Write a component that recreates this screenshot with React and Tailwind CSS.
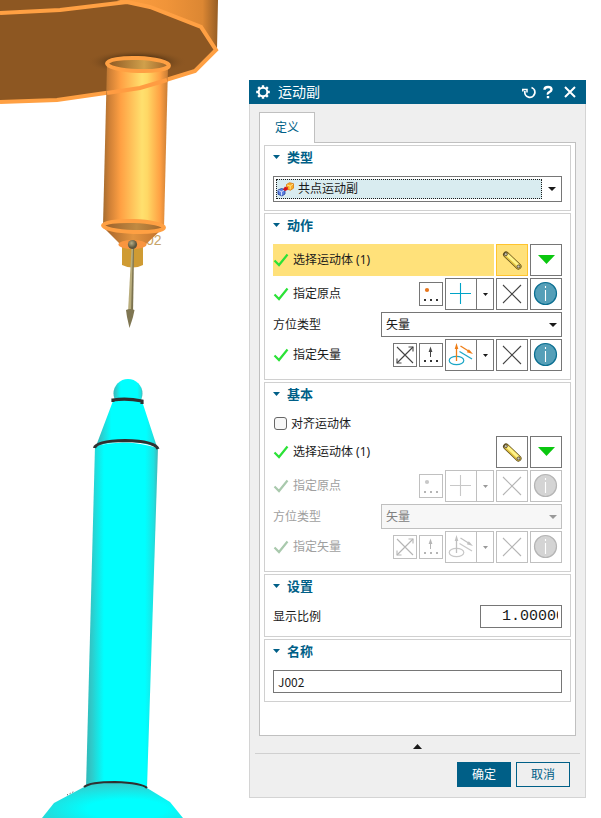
import { useState } from "react"

const SMALL_BTN = "w-6 h-6 shrink-0 flex items-center justify-center border bg-white border-[#767676] disabled:border-[#c0c0c0]"
const BIG_BTN = "w-8 h-8 shrink-0 flex items-center justify-center border bg-white border-[#767676] disabled:border-[#c0c0c0]"

/* ---------- ICONS ---------- */

const Small = ({ children }) => (
  <svg width="22" height="22" viewBox="1 1 22 22" fill="none">{children}</svg>
)

const Big = ({ children }) => (
  <svg width="30" height="30" viewBox="1 1 30 30" fill="none">{children}</svg>
)

const Dots = ({ color }) => (
  <path d="M5 17h2v2H5zM11 17h2v2h-2zM17 17h2v2h-2z" fill={color} />
)

const PointIcon = ({ off }) => (
  <Small>
    <circle cx="8" cy="8" r="2.1" fill={off ? "#c8c8c8" : "#e8761c"} />
    <Dots color={off ? "#b5b5b5" : "#333"} />
  </Small>
)

const VectorDotsIcon = ({ off }) => (
  <Small>
    <path d="M11.500 14V7" stroke={off ? "#b5b5b5" : "#444"} />
    <path d="M11.500 3.500l1.900 5.500H9.600z" fill={off ? "#b5b5b5" : "#444"} />
    <Dots color={off ? "#b5b5b5" : "#333"} />
  </Small>
)

const ReverseIcon = ({ off }) => (
  <Small>
    <g stroke={off ? "#b5b5b5" : "#444"} strokeWidth="1.1">
      <path d="M4 4l16 16M4 20L20 4" />
      <path d="M15.500 4H20v4.500M4 15.500V20h4.500" />
    </g>
  </Small>
)

const PlusIcon = ({ off }) => (
  <Big>
    <path d="M5 15.500h21M15.500 5v21" stroke={off ? "#c8c8c8" : "#00a3c7"} strokeWidth="1.1" />
  </Big>
)

const CrossIcon = ({ off }) => (
  <Big>
    <path d="M7 7l18 18M7 25L25 7" stroke={off ? "#b5b5b5" : "#444"} strokeWidth="1.1" />
  </Big>
)

const InfoIcon = ({ off }) => (
  <Big>
    <circle cx="15.500" cy="15.500" r="11" fill={off ? "#d4d4d4" : "#559fb8"} stroke={off ? "#b5b5b5" : "#0b6f91"} strokeWidth="1.2" />
    <path d="M15.500 12v11M15.500 8v2" stroke="#fff" strokeWidth="1.1" />
  </Big>
)

const VectorIcon = ({ off }) => {
  const warm = off ? "#c0c0c0" : "#ee7d16"
  const cool = off ? "#c8c8c8" : "#1ba6c6"
  return (
    <Big>
      <ellipse cx="11.500" cy="21.500" rx="7.300" ry="4.200" stroke={cool} strokeWidth="1.2" />
      <path d="M14.500 12.500l12.500 7.500" stroke={cool} strokeWidth="1.2" />
      <path d="M11.500 22V8" stroke={warm} strokeWidth="1.3" />
      <path d="M11.500 4l1.800 6H9.700z" fill={warm} />
      <path d="M15.500 7l8 5" stroke={warm} strokeWidth="1.3" />
      <path d="M28 15l-6.200-1.800 2-3z" fill={warm} />
    </Big>
  )
}

const LinkBodyIcon = () => (
  <Big>
    <path d="M10 10.500l12.500 12" stroke="#5e4d1c" strokeWidth="6" strokeLinecap="round" />
    <path d="M10.500 11l12 11.500" stroke="#e0c040" strokeWidth="4.600" strokeLinecap="round" />
    <path d="M11.500 11l10.500 10" stroke="#fff38a" strokeWidth="3" />
    <circle cx="9.800" cy="10.200" r="1.500" fill="#c9c3b0" stroke="#4d4533" strokeWidth=".8" />
    <circle cx="22.500" cy="22.500" r="1.500" fill="#c9c3b0" stroke="#4d4533" strokeWidth=".8" />
  </Big>
)

const GreenDown = () => (
  <Big>
    <path d="M8 11h17L16.500 20z" fill="#0ac70f" />
  </Big>
)

const CheckIcon = ({ off }) => (
  <svg width="16" height="16" viewBox="0 0 16 16" fill="none" className="shrink-0">
    <path d="M1.500 8.500l4.500 4.500L14.500 2.500" stroke={off ? "#a9c9ad" : "#2be237"} strokeWidth="2.200" />
  </svg>
)

const Caret = ({ off, small }) => (
  <svg width={small ? 5 : 8} height={small ? 3 : 4} viewBox="0 0 8 4" preserveAspectRatio="none" className="shrink-0">
    <path d="M0 0h8L4 4z" fill={off ? "#999" : "#1a1a1a"} />
  </svg>
)

const TypeIcon = () => (
  <svg width="17" height="15" viewBox="0 0 17 15" className="shrink-0">
    <path d="M1 8l3.500-1.500L8 7.500v4.500L5 14l-4-1.800z" fill="#5c80e0" stroke="#24409c" strokeWidth=".8" />
    <path d="M1.500 8.500l3 1.200L7.500 8M4.500 9.700v3.800" stroke="#dfe8ff" strokeWidth=".9" fill="none" />
    <path d="M9.500 2.500l3-1.800 4 1v4.500l-3 2-4-1.200z" fill="#f9ad22" stroke="#d9780e" strokeWidth=".8" />
    <path d="M10 3l3.200 1L16 2.200M13.200 4v3.500" stroke="#ffe39a" strokeWidth=".9" fill="none" />
    <path d="M6 7.500l2-3 1.500 1 1.500-.5-.5 3-2.500 1z" fill="#d5121a" />
  </svg>
)

/* ---------- MODEL VIEW ---------- */

const Scene = () => (
  <svg viewBox="0 0 249 818" className="w-[249px] shrink-0 self-start" aria-hidden="true">
    <defs>
      <linearGradient id="rim" x1="0" x2="1">
        <stop offset="0" stopColor="#ffa042" />
        <stop offset=".5" stopColor="#f09439" />
        <stop offset=".85" stopColor="#dc8733" />
        <stop offset="1" stopColor="#965d24" />
      </linearGradient>
      <linearGradient id="tube" x1="0" x2="1">
        <stop offset="0" stopColor="#a56c2f" />
        <stop offset=".1" stopColor="#cf8036" />
        <stop offset=".27" stopColor="#ffa043" />
        <stop offset=".6" stopColor="#ffe06e" />
        <stop offset=".68" stopColor="#ffd865" />
        <stop offset=".88" stopColor="#ffa043" />
        <stop offset="1" stopColor="#c77c35" />
      </linearGradient>
      <linearGradient id="hole" x1="0" x2="1">
        <stop offset="0" stopColor="#8d5722" />
        <stop offset=".6" stopColor="#d0a04b" />
        <stop offset="1" stopColor="#9e6228" />
      </linearGradient>
      <linearGradient id="collar" x1="0" x2="1">
        <stop offset="0" stopColor="#9b5f2a" />
        <stop offset=".55" stopColor="#c08a42" />
        <stop offset="1" stopColor="#a3662b" />
      </linearGradient>
      <linearGradient id="cone" x1="0" x2="1">
        <stop offset="0" stopColor="#a5642b" />
        <stop offset=".5" stopColor="#e3943f" />
        <stop offset="1" stopColor="#c0712d" />
      </linearGradient>
      <radialGradient id="shade">
        <stop offset=".5" stopColor="#5a3816" />
        <stop offset="1" stopColor="#8d5722" stopOpacity="0" />
      </radialGradient>
      <linearGradient id="rod" x1="0" x2="1">
        <stop offset="0" stopColor="#2fb9b9" />
        <stop offset=".08" stopColor="#2fcaca" />
        <stop offset=".25" stopColor="#00ffff" />
        <stop offset=".82" stopColor="#00ffff" />
        <stop offset=".94" stopColor="#1fe0e0" />
        <stop offset="1" stopColor="#45b5b5" />
      </linearGradient>
      <radialGradient id="base" cx=".6" cy=".75" r=".7">
        <stop offset=".4" stopColor="#00ffff" />
        <stop offset="1" stopColor="#2fd0d0" />
      </radialGradient>
      <radialGradient id="ball" cx=".4" cy=".35">
        <stop offset="0" stopColor="#b5ad85" />
        <stop offset="1" stopColor="#5d563e" />
      </radialGradient>
    </defs>

    {/* flange */}
    <path d="M115 0H218L217 50 201 27 150 7 127 3z" fill="url(#rim)" />
    <path d="M0 0H117L127 3 150 7 201 27 216 50 195 71 140 88 57 100 0 102z" fill="#8d5722" />
    <ellipse cx="137" cy="62" rx="50" ry="12" fill="url(#shade)" />
    <path d="M0 13L60 10 127 2 150 7 201 27 216 50 195 71 140 88 57 100 0 102" fill="none" stroke="#ffa043" strokeWidth="4" />

    {/* orange tube */}
    <path d="M107 64L168 66 164 228 103 225z" fill="url(#tube)" />
    <ellipse cx="138" cy="64.500" rx="31" ry="6.500" transform="rotate(2 138 64.500)" fill="url(#hole)" stroke="#ffa043" strokeWidth="4" />
    <path d="M107 93L140 88 167 80" fill="none" stroke="#ff9c42" strokeWidth="4" />
    <text x="146" y="245" className="font-['Liberation_Sans'] text-[14px]" fill="#c8a468">02</text>
    <path d="M105 229L122 246H144L161 230z" fill="url(#cone)" />
    <ellipse cx="133.500" cy="226.500" rx="30.500" ry="5.500" transform="rotate(2 133.500 226.500)" fill="url(#collar)" stroke="#ffa043" strokeWidth="4" />
    <path d="M122 246h21v19q-10 5-21 0z" fill="#cf9b33" />
    <ellipse cx="132.500" cy="244.500" rx="14" ry="4.500" fill="#f9953f" />

    {/* direction arrow */}
    <path d="M131.500 248h2L133 312h-5z" fill="#b9ad7c" />
    <path d="M133 248h1L133 312h-2z" fill="#7c7350" />
    <path d="M126 310q4-2 8.500 0l-1.500 7-3.500 11-2.500-11z" fill="#7f7652" />
    <circle cx="132.500" cy="244.500" r="4.600" fill="url(#ball)" />

    {/* cyan pin */}
    <circle cx="128" cy="393.500" r="14.500" fill="url(#rod)" />
    <path d="M113 401L142 401 157 447 Q126 437 96 446z" fill="url(#rod)" />
    <path d="M95 446Q126 438 158 448L147 788H86z" fill="url(#rod)" />
    <path d="M84 787Q115 777 147 788L170 802 183 818H42L54 803z" fill="url(#base)" />
    <path d="M67 795l8-4" stroke="#444" strokeDasharray="1 2" />
    <path d="M113 402V400Q127 398 142 401V404" fill="none" stroke="#303030" strokeWidth="3.200" />
    <path d="M94.500 448Q96 441 125 440.500 155 441 158 449" fill="none" stroke="#303030" strokeWidth="3.200" />
    <path d="M84 787Q90 782 115 782 142 783 147 788" fill="none" stroke="#303030" strokeWidth="2.200" />
  </svg>
)

/* ---------- FORM PARTS ---------- */

const Group = ({ title, children }) => (
  <section className="border border-[#d0d0d0] px-2 pb-2 bg-white">
    <h2 className="h-[22px] mb-2 flex items-center text-[13px] font-bold text-[#005f87]">
      <svg width="7" height="4" viewBox="0 0 7 4" className="mr-[7px]">
        <path d="M0 0h7L3.500 4z" fill="#005f87" />
      </svg>
      {title}
    </h2>
    <div className="flex flex-col gap-0.5">{children}</div>
  </section>
)

const Step = ({ label, off, active, children }) => (
  <div className="flex items-center gap-0.5">
    <div className={`h-8 flex-1 flex items-center gap-1 whitespace-nowrap ${active ? "bg-[#ffe17a]" : ""} ${off ? "text-[#a0a0a0]" : ""}`}>
      <CheckIcon off={off} />
      {label}
    </div>
    {children}
  </div>
)

const Split = ({ off, label, children }) => (
  <div className="flex shrink-0">
    <button className={BIG_BTN} disabled={off} aria-label={label}>{children}</button>
    <button
      className="w-[18px] h-8 -ml-px flex items-center justify-center border bg-white border-[#767676] disabled:border-[#c0c0c0]"
      disabled={off}
      aria-label={`${label}选项`}
    >
      <Caret off={off} small />
    </button>
  </div>
)

const SelectBody = ({ active }) => (
  <Step label="选择运动体 (1)" active={active}>
    <button
      className={`w-8 h-8 shrink-0 flex items-center justify-center border ${active ? "bg-[#ffe17a] border-[#ffc42e]" : "bg-white border-[#767676]"}`}
      aria-label="选择运动体"
    >
      <LinkBodyIcon />
    </button>
    <button className={BIG_BTN} aria-label="下一步"><GreenDown /></button>
  </Step>
)

const Placement = ({ id, off }) => (
  <>
    <Step label="指定原点" off={off}>
      <button className={SMALL_BTN} disabled={off} aria-label="点对话框"><PointIcon off={off} /></button>
      <Split off={off} label="点"><PlusIcon off={off} /></Split>
      <button className={BIG_BTN} disabled={off} aria-label="清除原点"><CrossIcon off={off} /></button>
      <button className={BIG_BTN} disabled={off} aria-label="原点信息"><InfoIcon off={off} /></button>
    </Step>
    <div className="flex items-center">
      <label htmlFor={id} className={`flex-1 ${off ? "text-[#a0a0a0]" : ""}`}>方位类型</label>
      <div className="relative w-[181px]">
        <select
          id={id}
          disabled={off}
          className="block w-full h-[25px] pl-1 pr-5 appearance-none border bg-white border-[#767676] disabled:bg-[#f7f7f7] disabled:border-[#c0c0c0] disabled:text-[#808080] disabled:opacity-100"
        >
          <option>矢量</option>
        </select>
        <div className="absolute inset-y-0 right-[5px] flex items-center pointer-events-none">
          <Caret off={off} />
        </div>
      </div>
    </div>
    <Step label="指定矢量" off={off}>
      <button className={SMALL_BTN} disabled={off} aria-label="反向"><ReverseIcon off={off} /></button>
      <button className={SMALL_BTN} disabled={off} aria-label="矢量对话框"><VectorDotsIcon off={off} /></button>
      <Split off={off} label="矢量"><VectorIcon off={off} /></Split>
      <button className={BIG_BTN} disabled={off} aria-label="清除矢量"><CrossIcon off={off} /></button>
      <button className={BIG_BTN} disabled={off} aria-label="矢量信息"><InfoIcon off={off} /></button>
    </Step>
  </>
)

const App = () => {
  const [aligned, setAligned] = useState(false)
  const [scale, setScale] = useState("1.00000")
  const [name, setName] = useState("J002")

  return (
    <main className="flex items-start min-h-screen bg-white overflow-hidden font-['Noto_Sans','Noto_Sans_CJK_SC',sans-serif] text-[12px] leading-4 text-[#1a1a1a]">
      <Scene />

      <div role="dialog" aria-labelledby="dlg-title" className="flex-1 min-w-0 mt-20 mr-[15px] bg-[#efefef]">
        {/* TITLE BAR */}
        <header className="h-6 px-1.5 flex items-center bg-[#005f87] text-white">
          <svg width="16" height="16" viewBox="0 0 16 16" fill="none" stroke="#fff">
            <circle cx="8" cy="8" r="4.300" strokeWidth="2" />
            <path d="M8 1.200v2.500M8 12.300v2.500M1.200 8h2.500M12.300 8h2.500M3.200 3.200l1.800 1.800M11 11l1.800 1.800M3.200 12.800L5 11M11 5l1.800-1.800" strokeWidth="2.400" />
          </svg>
          <h1 id="dlg-title" className="flex-1 ml-[7px] text-[14px]">运动副</h1>
          <div className="flex items-center gap-1.5">
            <button aria-label="重置">
              <svg width="14" height="14" viewBox="0 0 14 14" fill="none" stroke="#fff" strokeWidth="1.800">
                <path d="M9.500 2.500a5 5 0 1 1-6.500 3.500" />
                <path d="M.8 6.500V4.500H5V7.500" strokeWidth="1.500" />
              </svg>
            </button>
            <button aria-label="帮助">
              <svg width="12" height="14" viewBox="0 0 12 14" fill="none" stroke="#fff" strokeWidth="2.400">
                <path d="M2.500 4.800Q2.500 2 6 2t3.500 2.600Q9.500 6 7.500 7T6 9.500M6 11v2.300" />
              </svg>
            </button>
            <button aria-label="关闭">
              <svg width="20" height="14" viewBox="0 0 20 14" fill="none" stroke="#fff" strokeWidth="2">
                <path d="M5 2l10 10M15 2L5 12" />
              </svg>
            </button>
          </div>
        </header>

        <div className="border border-t-0 border-[#d4d4d4]">
          {/* TAB + PANEL */}
          <div className="px-[9px] pt-2">
            <div role="tablist" className="flex">
              <button role="tab" aria-selected="true" className="relative -mb-px w-14 h-[31px] border border-b-0 border-[#c0c0c0] bg-white text-[#005f87]">
                定义
              </button>
            </div>
            <div role="tabpanel" className="border border-[#c0c0c0] bg-white px-1 pt-0.5 pb-[33px] flex flex-col gap-0.5">
              <Group title="类型">
                <div className="h-[26px] p-0.5 flex items-center border border-[#767676]">
                  <div className="flex-1 h-full flex items-center border border-dotted border-[#1a1a1a] bg-[#d9ecf0]">
                    <TypeIcon />
                    <select aria-label="类型" className="flex-1 h-full pl-1 appearance-none outline-none">
                      <option>共点运动副</option>
                    </select>
                  </div>
                  <div className="w-[17px] flex justify-end pr-[3px]">
                    <Caret />
                  </div>
                </div>
              </Group>

              <Group title="动作">
                <SelectBody active />
                <Placement id="orient-action" />
              </Group>

              <Group title="基本">
                <label className="h-[21px] flex items-center gap-1">
                  <input
                    type="checkbox"
                    checked={aligned}
                    onChange={(e) => setAligned(e.target.checked)}
                    className="w-[13px] h-[13px] ml-px appearance-none rounded-[3px] border border-[#666] bg-[#f7f7f7] checked:bg-[#005f87]"
                  />
                  对齐运动体
                </label>
                <SelectBody />
                <Placement id="orient-base" off />
              </Group>

              <Group title="设置">
                <div className="flex items-center">
                  <label htmlFor="scale" className="flex-1">显示比例</label>
                  <input
                    id="scale"
                    value={scale}
                    onChange={(e) => setScale(e.target.value)}
                    className="w-[82px] h-[23px] pl-[21px] pr-[3px] border border-[#767676] bg-white font-['Liberation_Mono',monospace] text-[15px]"
                  />
                </div>
              </Group>

              <Group title="名称">
                <input
                  aria-label="名称"
                  value={name}
                  onChange={(e) => setName(e.target.value)}
                  className="w-full h-[23px] px-1 border border-[#767676] bg-white font-['Noto_Sans_CJK_SC',sans-serif]"
                />
              </Group>
            </div>
          </div>

          {/* FOOTER */}
          <div className="mx-[5px] h-[18px] pb-1 border-b border-[#d0d0d0] flex items-end justify-center">
            <button aria-label="收起">
              <svg width="9" height="5" viewBox="0 0 9 5" className="block">
                <path d="M4.500 0L9 5H0z" fill="#1a1a1a" />
              </svg>
            </button>
          </div>
          <div className="flex justify-end gap-[5px] pt-2 pb-2.5 pr-[15px]">
            <button className="w-[54px] h-[25px] bg-[#005f87] border border-[#005f87] text-white">确定</button>
            <button className="w-[54px] h-[25px] border border-[#005f87] text-[#005f87]">取消</button>
          </div>
        </div>
      </div>
    </main>
  )
}

export default App
